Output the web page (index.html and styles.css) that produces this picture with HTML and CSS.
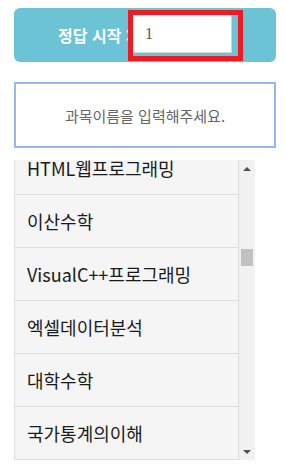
FILE: index.html
```html
<!DOCTYPE html>
<html lang="ko">
<head>
    <meta charset="UTF-8">
    <meta name="viewport" content="width=device-width, initial-scale=1.0">
    <title>정답 입력</title>
    <link rel="stylesheet" href="styles.css">
</head>
<body>
    <div class="page">
        <div class="start-bar">
            <label for="startNo" class="start-label">정답 시작 :</label>
            <span class="start-wrap">
                <input type="text" id="startNo" class="start-input" value="1">
            </span>
        </div>
        <div class="subject-box">과목이름을 입력해주세요.</div>
        <div class="list-wrap">
            <ul class="subject-list" id="subjectList"></ul>
            <div class="scrollbar">
                <div class="scroll-btn"><span class="arrow-up"></span></div>
                <div class="scroll-track"><div class="scroll-thumb"></div></div>
                <div class="scroll-btn"><span class="arrow-down"></span></div>
            </div>
        </div>
    </div>

    <script>
        const before = ['자료구조', '컴퓨터개론', '운영체제', '데이터베이스', '파이썬프로그래밍', '선형대수',
            '확률과통계', '웹디자인', '자바프로그래밍', '네트워크개론', '경영학원론', '회계원리',
            '마케팅원론', '경제학개론', '심리학개론', '통계학개론', '영어회화', '글쓰기의기초',
            '인공지능개론', '모바일프로그래밍', '정보보호개론', '멀티미디어개론', 'C프로그래밍', '소프트웨어공학'];
        const shown = ['HTML웹프로그래밍', '이산수학', 'VisualC++프로그래밍', '엑셀데이터분석', '대학수학', '국가통계의이해'];
        const subjects = before.concat(shown);
        for (let i = 0; i < 60; i++) {
            subjects.push(before[i % before.length]);
        }

        const list = document.getElementById('subjectList');
        subjects.forEach(function(name) {
            const li = document.createElement('li');
            li.className = 'subject-item';
            li.textContent = name;
            list.appendChild(li);
        });
        list.scrollTop = before.length * 53 + 18;
    </script>
</body>
</html>
```

FILE: styles.css
```css
body {
    margin: 0;
    font-family: "Noto Sans CJK KR", "Noto Sans", sans-serif;
}
.page {
    padding: 8px 10px 0 14px;
}
.start-bar {
    display: flex;
    align-items: center;
    height: 54px;
    padding-left: 44px;
    background-color: #6cc3d5;
    border-radius: 6px;
}
.start-label {
    color: white;
    font-size: 16px;
    font-weight: bold;
    margin-right: -3px;
    white-space: nowrap;
}
.start-wrap {
    display: block;
    border: 5px solid #ed1c24;
    padding: 0 6px 3px 0;
    margin-top: 1px;
    position: relative;
}
.start-input {
    display: block;
    width: 99px;
    height: 38px;
    box-sizing: border-box;
    border: none;
    padding: 0 0 0 12px;
    background: white;
    box-shadow: inset -1px -1px 0 #c6d9de;
    font-family: "Liberation Serif", serif;
    font-size: 16px;
    color: #555;
    outline: none;
}
.subject-box {
    margin-top: 20px;
    height: 66px;
    box-sizing: border-box;
    border: 2px solid #93b8f2;
    display: flex;
    align-items: center;
    justify-content: center;
    color: #666;
    font-size: 15px;
}
.list-wrap {
    display: flex;
    margin-top: 12px;
    height: 300px;
}
.subject-list {
    list-style: none;
    margin: 0;
    padding: 0;
    width: 225px;
    height: 300px;
    overflow: hidden;
}
.subject-item {
    background-color: #f5f5f5;
    border: 1px solid #ddd;
    border-top: none;
    padding: 15px 12px;
    line-height: 22px;
    font-size: 18px;
    color: #1a1a1a;
    white-space: nowrap;
}
.scrollbar {
    width: 16px;
    display: flex;
    flex-direction: column;
    background-color: #f1f1f1;
}
.scroll-btn {
    height: 17px;
    display: flex;
    align-items: center;
    justify-content: center;
}
.arrow-up,
.arrow-down {
    width: 0;
    height: 0;
    border-left: 4px solid transparent;
    border-right: 4px solid transparent;
}
.arrow-up {
    border-bottom: 4px solid #505050;
}
.arrow-down {
    border-top: 4px solid #505050;
}
.scroll-track {
    flex: 1;
}
.scroll-thumb {
    margin: 72px 2px 0 2px;
    height: 17px;
    background-color: #c1c1c1;
}
```
